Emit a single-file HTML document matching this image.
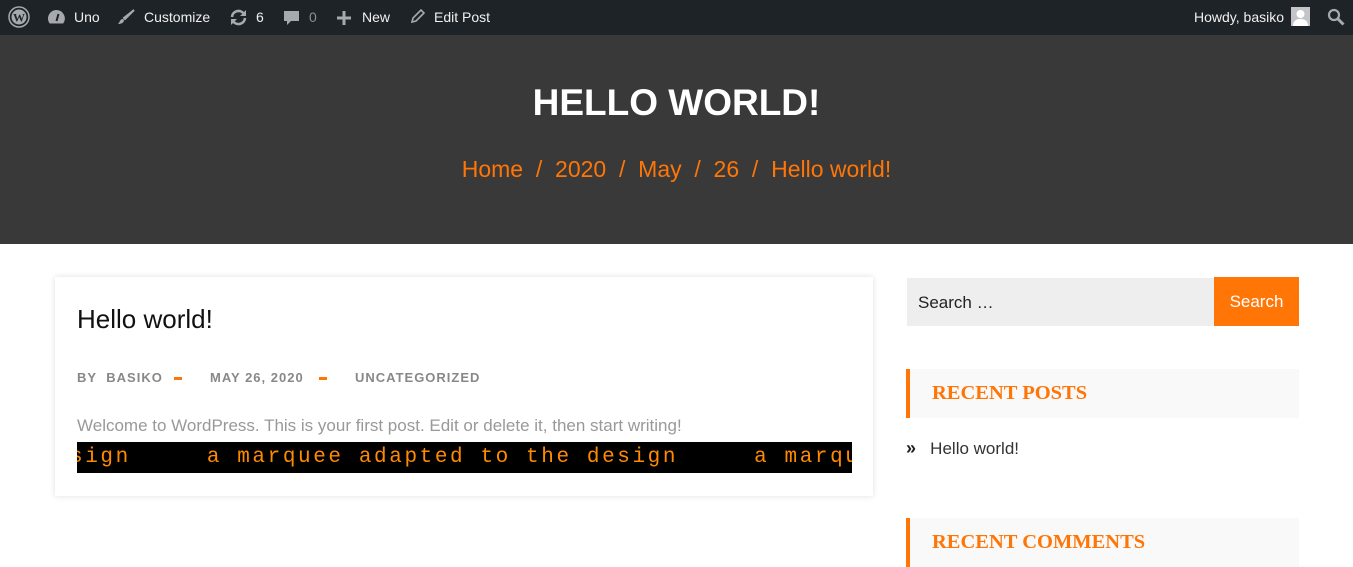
<!DOCTYPE html>
<html><head><meta charset="utf-8"><style>
*{margin:0;padding:0;box-sizing:border-box}
body{width:1353px;height:552px;overflow:hidden;background:#fff;font-family:"Liberation Sans",sans-serif;position:relative}
.bar{position:absolute;left:0;top:0;width:1353px;height:35px;background:#1d2327;color:#f0f0f1;font-size:14px}
.bar span{position:absolute;top:9px;white-space:nowrap}
.bar svg{position:absolute}
.hdr{position:absolute;left:0;top:35px;width:1353px;height:209px;background:#393939;text-align:center}
.hdr h1{position:absolute;top:47px;width:100%;color:#fff;font-size:37px;font-weight:bold}
.hdr .bc{position:absolute;top:121px;width:100%;color:#ff7607;font-size:23px}
.card{position:absolute;left:55px;top:277px;width:818px;height:219px;background:#fff;box-shadow:0 0 6px rgba(0,0,0,.13)}
.card h2{position:absolute;left:22px;top:27px;font-size:26px;font-weight:normal;color:#111}
.meta{position:absolute;top:93px;font-size:13px;letter-spacing:1px;color:#888;font-weight:bold}
.dash{position:absolute;top:100px;width:8px;height:3px;background:#ff7607}
.card p{position:absolute;left:22px;top:139px;font-size:17px;color:#999}
.mq{position:absolute;left:22px;top:165px;width:775px;height:31px;background:#000;overflow:hidden;color:#ff8a00;font-family:"Liberation Mono",monospace;font-size:21px;letter-spacing:2.6px;line-height:31px;white-space:pre;text-indent:-7px}
.srch{position:absolute;left:907px;top:278px;width:307px;height:48px;background:#eee;font-size:17px;color:#222;padding:15px 11px}
.sbtn{position:absolute;left:1214px;top:277px;width:85px;height:49px;background:#ff7607;color:#fff;font-size:17px;text-align:center;line-height:49px}
.wt{position:absolute;left:906px;width:393px;height:49px;background:#f9f9f9;border-left:4px solid #ff7607;color:#ff7607;font-family:"Liberation Serif",serif;font-weight:bold;font-size:20.5px;padding:13px 0 0 22px}
</style></head><body>
<div class="bar">
<svg style="left:8px;top:6px" width="22" height="22" viewBox="0 0 22 22"><circle cx="11" cy="11" r="10" fill="none" stroke="#a7aaad" stroke-width="1.5"/><circle cx="11" cy="11" r="7.5" fill="#a7aaad"/><text x="11" y="15.5" font-size="12" font-family="Liberation Serif" font-weight="bold" text-anchor="middle" fill="#1d2327">W</text></svg>
<svg style="left:47px;top:9px" width="19" height="16" viewBox="0 0 19 16"><path d="M9.5 1A8.5 8.5 0 0 0 1 9.5c0 2 .6 3.7 1.8 5h13.4A8.5 8.5 0 0 0 9.5 1z" fill="#a7aaad"/><path d="M9.5 12l2-7" stroke="#1d2327" stroke-width="2"/></svg>
<span style="left:74px">Uno</span>
<svg style="left:117px;top:9px" width="18" height="17" viewBox="0 0 18 17"><path d="M17 1L8 10l-1-1z" fill="#a7aaad" stroke="#a7aaad" stroke-width="2"/><path d="M6 10c-3 0-3 3-5 5 3 0 6-1 6-4z" fill="#a7aaad"/></svg>
<span style="left:144px">Customize</span>
<svg style="left:229px;top:9px" width="19" height="17" viewBox="0 0 19 17"><path d="M3 8a6.5 6.5 0 0 1 12-3M16 9a6.5 6.5 0 0 1-12 3" fill="none" stroke="#a7aaad" stroke-width="2.6"/><path d="M17 1v6h-6zM2 16v-6h6z" fill="#a7aaad"/></svg>
<span style="left:256px">6</span>
<svg style="left:283px;top:10px" width="17" height="17" viewBox="0 0 17 17"><path d="M1 1h15v10H8l-4 4v-4H1z" fill="#a7aaad"/></svg>
<span style="left:309px;color:#8c8f94">0</span>
<svg style="left:337px;top:11px" width="14" height="14" viewBox="0 0 14 14"><path d="M7 0v14M0 7h14" stroke="#a7aaad" stroke-width="3"/></svg>
<span style="left:362px">New</span>
<svg style="left:410px;top:9px" width="15" height="15" viewBox="0 0 15 15"><path d="M2 13l1-4 8-8 3 3-8 8z" fill="none" stroke="#a7aaad" stroke-width="1.6"/></svg>
<span style="left:434px">Edit Post</span>
<span style="left:1194px">Howdy, basiko</span>
<svg style="left:1291px;top:7px" width="19" height="19" viewBox="0 0 19 19"><rect width="19" height="19" fill="#c3c4c7"/><circle cx="9.5" cy="7" r="4" fill="#fff"/><path d="M2 19c0-5 3-7 7.5-7s7.5 2 7.5 7z" fill="#fff"/></svg>
<svg style="left:1327px;top:8px" width="18" height="18" viewBox="0 0 18 18"><circle cx="7" cy="7" r="5" fill="none" stroke="#a7aaad" stroke-width="2.2"/><path d="M10.5 10.5l6 6" stroke="#a7aaad" stroke-width="3"/></svg>
</div>
<div class="hdr"><h1>HELLO WORLD!</h1><div class="bc">Home &nbsp;/&nbsp; 2020 &nbsp;/&nbsp; May &nbsp;/&nbsp; 26 &nbsp;/&nbsp; Hello world!</div></div>
<div class="card">
<h2>Hello world!</h2>
<div class="meta" style="left:22px">BY&nbsp; BASIKO</div><div class="dash" style="left:119px"></div>
<div class="meta" style="left:155px">MAY 26, 2020</div><div class="dash" style="left:264px"></div>
<div class="meta" style="left:300px">UNCATEGORIZED</div>
<p>Welcome to WordPress. This is your first post. Edit or delete it, then start writing!</p>
<div class="mq">sign     a marquee adapted to the design     a marquee</div>
</div>
<div class="srch">Search …</div><div class="sbtn">Search</div>
<div class="wt" style="top:369px">RECENT POSTS</div>
<div style="position:absolute;left:906px;top:438px;font-size:17px;color:#333"><b style="font-size:18px;color:#222">»</b>&nbsp;&nbsp; Hello world!</div>
<div class="wt" style="top:518px">RECENT COMMENTS</div>
</body></html>
